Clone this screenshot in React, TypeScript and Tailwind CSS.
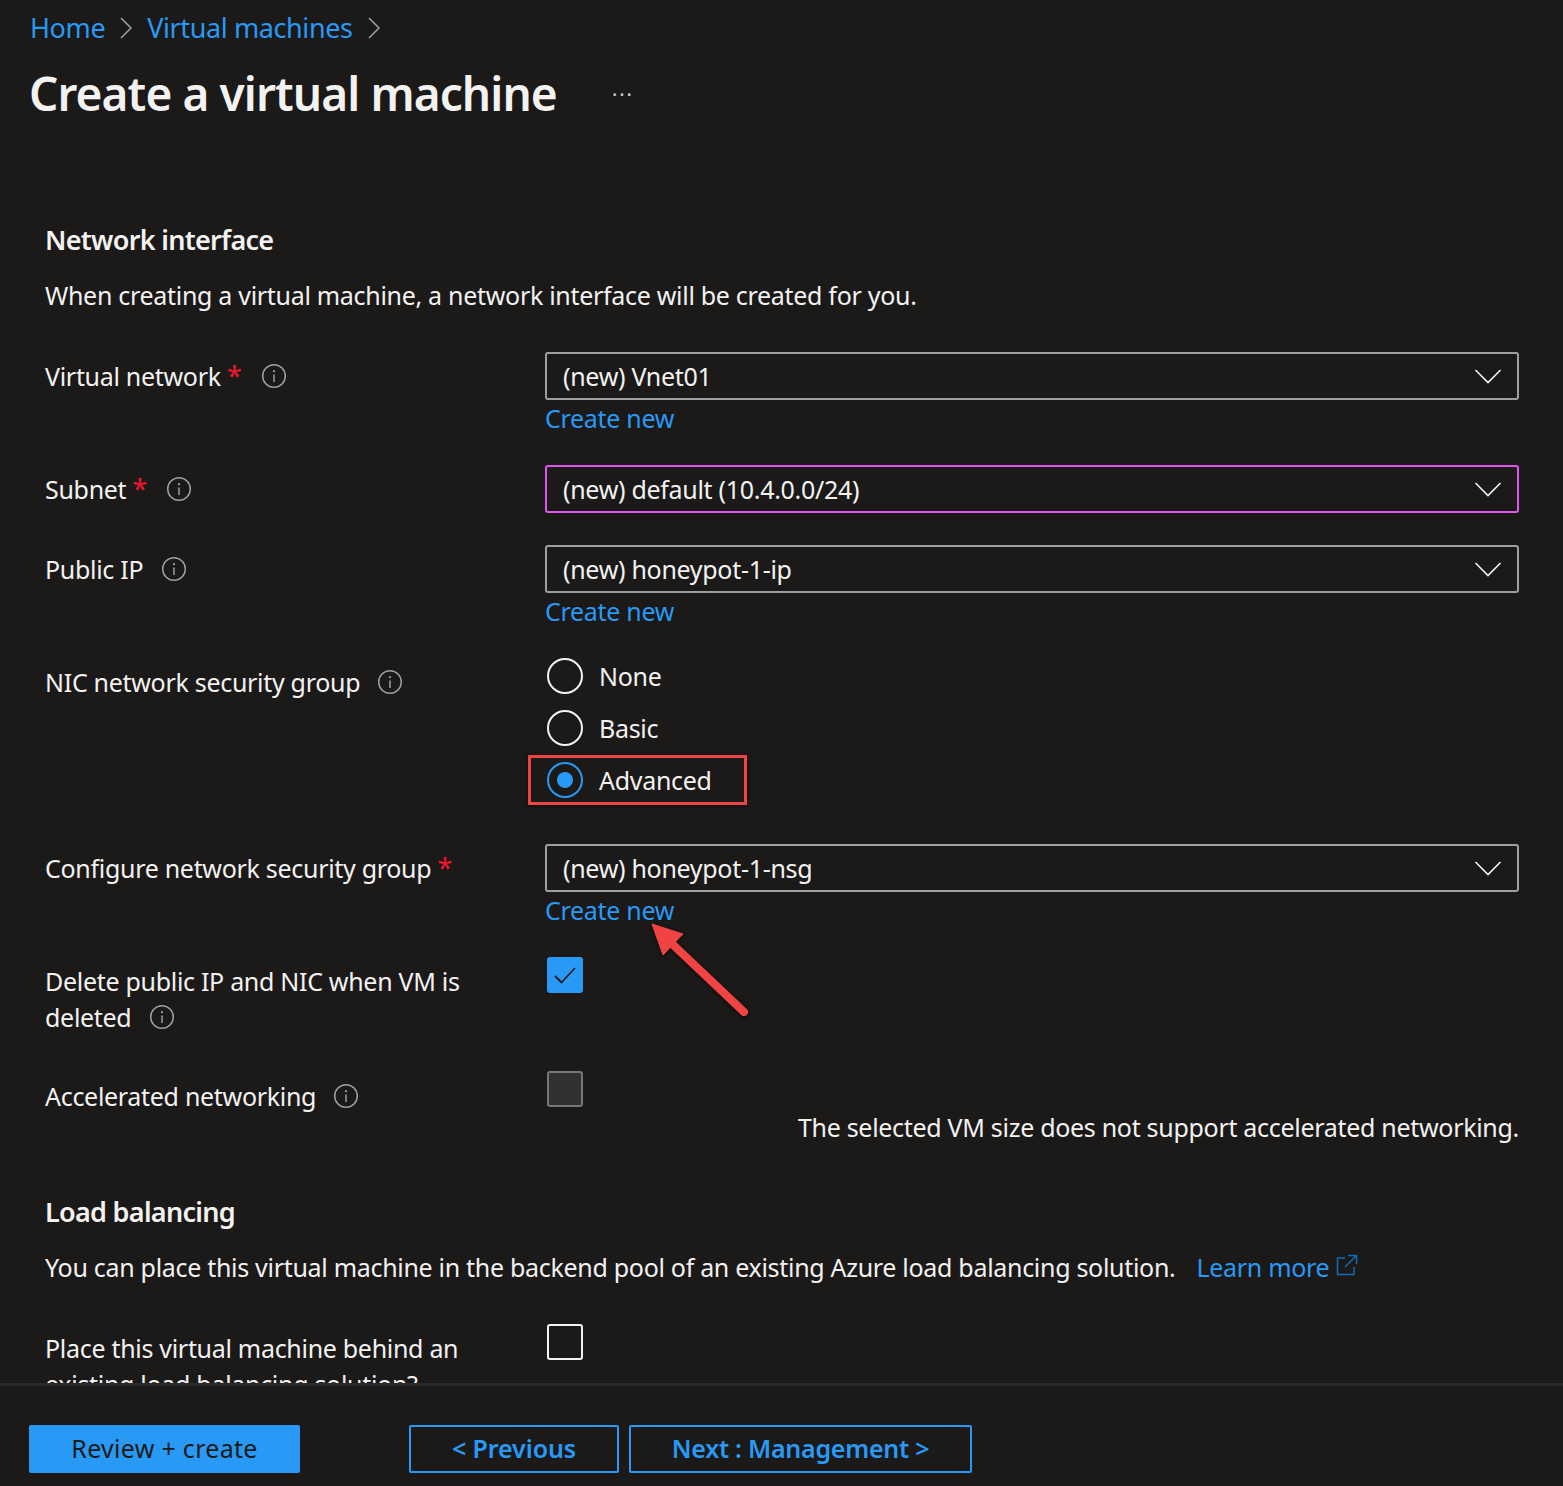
import { ReactNode } from 'react';

const Info = () => (
  <svg width="26" height="26" viewBox="0 0 26 26" fill="none" className="shrink-0">
    <circle cx="13" cy="13" r="11.3" stroke="#a19f9d" strokeWidth="1.5" />
    <circle cx="13" cy="8.2" r="1.1" fill="#a19f9d" />
    <path d="M13 11.5v7.5" stroke="#a19f9d" strokeWidth="1.5" />
  </svg>
);

const Chevron = () => (
  <svg width="28" height="16" viewBox="0 0 28 16" fill="none" className="shrink-0">
    <path d="M1.5 2l12.5 12.5L26.5 2" stroke="#f3f2f1" strokeWidth="1.6" />
  </svg>
);

const Crumb = () => (
  <svg width="14" height="24" viewBox="0 0 14 24" fill="none" className="shrink-0">
    <path d="M2 2l10 10L2 22" stroke="#a19f9d" strokeWidth="1.5" />
  </svg>
);

const Star = () => <span className="text-[#f5162e] text-[27px] leading-none">*</span>;

const Select = ({ value, focused }: { value: string; focused?: boolean }) => (
  <div
    className={`h-12 flex items-center justify-between pl-[16px] pr-[15px] rounded-[3px] border-2 ${
      focused ? 'border-[#e054ee]' : 'border-[#a19f9d]'
    }`}
  >
    <span className="pt-[2px]">{value}</span>
    <Chevron />
  </div>
);

const CreateNew = () => <div className="h-[38px] leading-[36px] text-[#2899f5]">Create new</div>;

const Row = ({ label, right, className = '' }: { label: ReactNode; right: ReactNode; className?: string }) => (
  <div className={`grid grid-cols-[500px_974px] ${className}`}>
    <div className="leading-9">{label}</div>
    <div>{right}</div>
  </div>
);

const Radio = ({ label, checked }: { label: string; checked?: boolean }) => (
  <div className="h-[52px] flex items-center gap-[16px] pl-[2px]">
    <span
      className={`w-9 h-9 rounded-full border-2 flex items-center justify-center ${
        checked ? 'border-[#2899f5]' : 'border-[#f3f2f1]'
      }`}
    >
      {checked && <span className="w-4 h-4 rounded-full bg-[#2899f5]" />}
    </span>
    <span className="pt-[2px]">{label}</span>
  </div>
);

function App() {
  return (
    <div className="h-screen w-full overflow-hidden flex flex-col bg-[#1b1a19] text-[#f3f2f1] text-[25px] font-['Noto_Sans',sans-serif] tracking-[-0.3px]">
      <div className="pl-[30px] pt-[10px] h-[36px] flex items-center gap-[14px] mt-[5px] mb-[5px] text-[27px] tracking-[-0.4px] text-[#2899f5]">
        <span>Home</span>
        <Crumb />
        <span>Virtual machines</span>
        <Crumb />
      </div>
      <div className="pl-[29px] mt-[14px] flex items-center gap-[55px] h-[66px]">
        <h1 className="text-[46px] font-semibold tracking-[-0.9px]">Create a virtual machine</h1>
        <span className="text-[#d2d0ce] text-[20px] tracking-[2px] pb-[8px]">...</span>
      </div>

      <div className="relative flex-1 min-h-0 overflow-hidden pl-[45px] pt-[96px] border-b-[3px] border-[#2b2a29]">
        <h2 className="text-[27px] font-semibold leading-9 tracking-[-0.7px]">Network interface</h2>
        <p className="mt-[19px] leading-9">When creating a virtual machine, a network interface will be created for you.</p>

        <Row
          className="mt-[39px]"
          label={
            <div className="flex items-center h-12 gap-[19px]">
              <span>Virtual network <Star /></span>
              <Info />
            </div>
          }
          right={
            <>
              <Select value="(new) Vnet01" />
              <CreateNew />
            </>
          }
        />
        <Row
          className="mt-[27px]"
          label={
            <div className="flex items-center h-12 gap-[19px]">
              <span>Subnet <Star /></span>
              <Info />
            </div>
          }
          right={<Select value="(new) default (10.4.0.0/24)" focused />}
        />
        <Row
          className="mt-[32px]"
          label={
            <div className="flex items-center h-12 gap-[18px]">
              <span>Public IP</span>
              <Info />
            </div>
          }
          right={
            <>
              <Select value="(new) honeypot-1-ip" />
              <CreateNew />
            </>
          }
        />
        <Row
          className="mt-[27px]"
          label={
            <div className="flex items-center h-12 gap-[17px]">
              <span>NIC network security group</span>
              <Info />
            </div>
          }
          right={
            <div className="-mt-[8px]">
              <Radio label="None" />
              <Radio label="Basic" />
              <div className="relative">
                <Radio label="Advanced" checked />
                <div className="absolute left-[-17px] top-[1px] w-[219px] h-[50px] border-[3px] border-[#f04444] shadow-[0_1px_4px_rgba(0,0,0,0.6)]" />
              </div>
            </div>
          }
        />
        <Row
          className="mt-[38px]"
          label={
            <div className="flex items-center h-12">
              <span>Configure network security group <Star /></span>
            </div>
          }
          right={
            <>
              <Select value="(new) honeypot-1-nsg" />
              <CreateNew />
            </>
          }
        />
        <Row
          className="mt-[27px]"
          label={
            <div className="pt-[6px] w-[440px]">
              Delete public IP and NIC when VM is
              <div className="flex items-center gap-[18px]">
                <span>deleted</span>
                <Info />
              </div>
            </div>
          }
          right={
            <div className="pl-[2px]">
              <span className="w-9 h-9 rounded-[3px] bg-[#2899f5] flex items-center justify-center">
                <svg width="24" height="20" viewBox="0 0 24 20" fill="none">
                  <path d="M2 11l6.5 6.5L22 3" stroke="#1b1a19" strokeWidth="1.8" />
                </svg>
              </span>
            </div>
          }
        />
        <Row
          className="mt-[36px]"
          label={
            <div className="flex items-center h-12 gap-[17px] pt-[1px]">
              <span>Accelerated networking</span>
              <Info />
            </div>
          }
          right={
            <div className="pl-[2px]">
              <span className="block w-9 h-9 rounded-[3px] border-2 border-[#797775] bg-[#323130]" />
              <p className="text-right leading-9 mt-[2px]">The selected VM size does not support accelerated networking.</p>
            </div>
          }
        />
        <h2 className="text-[27px] font-semibold leading-9 mt-[49px] tracking-[-0.7px]">Load balancing</h2>
        <p className="mt-[19px] leading-9 flex items-center">
          <span>You can place this virtual machine in the backend pool of an existing Azure load balancing solution.</span>
          <span className="ml-[21px] text-[#2899f5]">Learn more</span>
          <svg width="22" height="22" viewBox="0 0 22 22" fill="none" className="ml-[7px] mb-[4px]">
            <path d="M9 4H1.5v16.5H18V13M12 1.5h8.5V10M20.5 1.5L9 13" stroke="#0f6cbd" strokeWidth="1.5" />
          </svg>
        </p>
        <Row
          className="mt-[39px]"
          label={<div className="pt-[6px] w-[440px]">Place this virtual machine behind an existing load balancing solution?</div>}
          right={
            <div className="pl-[2px]">
              <span className="block w-9 h-9 rounded-[3px] border-2 border-[#f3f2f1]" />
            </div>
          }
        />
        <svg width="110" height="110" viewBox="0 0 110 110" fill="none" className="absolute left-[644px] top-[793px] drop-shadow-[0_1px_2px_rgba(0,0,0,0.7)]">
          <path d="M8 5l31 10-20 21z" fill="#f04444" stroke="#f04444" strokeWidth="1" strokeLinejoin="round" />
          <path d="M24 21l76 72" stroke="#f04444" strokeWidth="8" strokeLinecap="round" />
        </svg>
      </div>

      <div className="h-[100px] shrink-0 flex items-start pl-[29px] pt-[39px]">
        <button className="w-[271px] h-12 rounded-[2px] bg-[#2899f5] text-[#1b1a19] tracking-[0.3px]">Review + create</button>
        <button className="ml-[109px] w-[210px] h-12 rounded-[2px] border-2 border-[#2899f5] text-[#2899f5] font-semibold tracking-[-0.1px]">
          &lt; Previous
        </button>
        <button className="ml-[10px] w-[343px] h-12 rounded-[2px] border-2 border-[#2899f5] text-[#2899f5] font-semibold tracking-[-0.25px]">
          Next : Management &gt;
        </button>
      </div>
    </div>
  );
}

export default App;
